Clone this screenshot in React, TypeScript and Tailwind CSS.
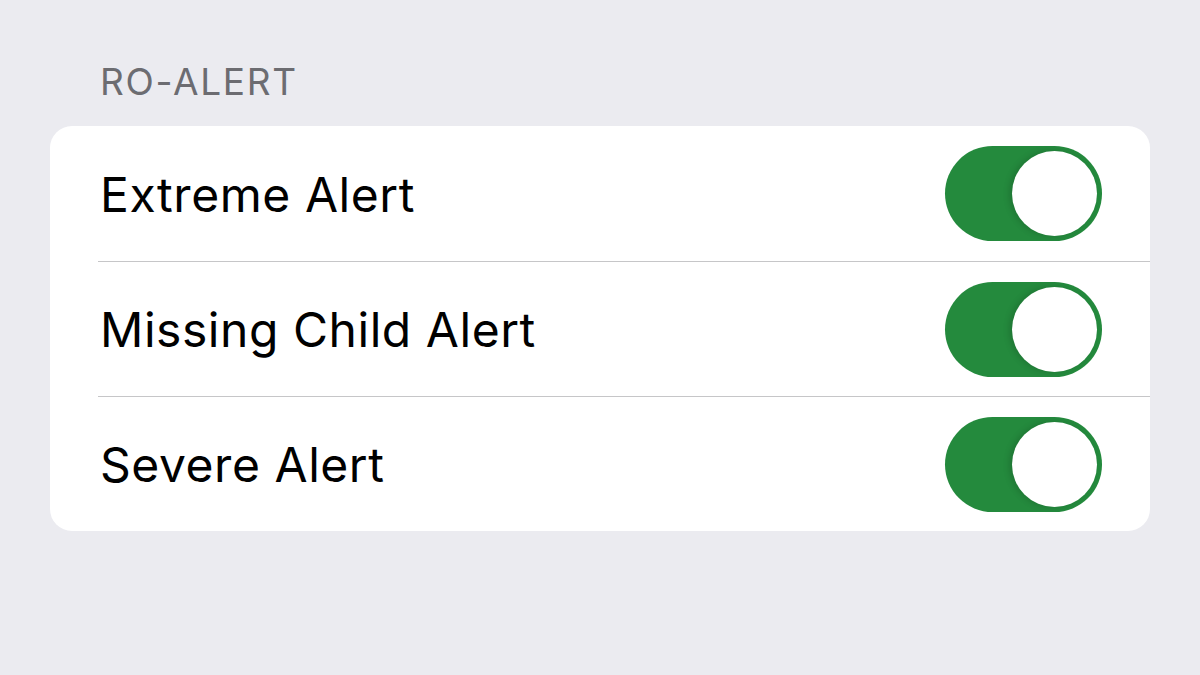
import React from "react";

function Toggle() {
  return (
    <div className="relative w-[157px] h-[95px] rounded-full bg-[#248a3d] shrink-0">
      <div className="absolute right-[5px] top-[5px] w-[85px] h-[85px] rounded-full bg-white shadow-[-3px_0_6px_rgba(0,0,0,0.15)]" />
    </div>
  );
}

const rows = ["Extreme Alert", "Missing Child Alert", "Severe Alert"];

export default function App() {
  return (
    <div
      className="w-[1200px] h-[675px] bg-[#ebebf0] pt-[62px] px-[50px]"
      style={{ fontFamily: "Inter, 'Noto Sans', sans-serif" }}
    >
      <div className="pl-[50px] h-[64px] text-[37px] leading-[40px] text-[#6c6c71] tracking-[1.7px]">
        RO-ALERT
      </div>
      <div className="bg-white rounded-[22px] overflow-hidden">
        {rows.map((r, i) => (
          <div key={r} className="flex h-[135px]">
            <div className="w-[48px] shrink-0" />
            <div
              className={`flex flex-1 items-center justify-between pl-[2px] pr-[48px] ${
                i > 0 ? "border-t border-[#c6c6c8]" : ""
              }`}
            >
              <span className="text-[48px] text-black tracking-[0.55px] pt-[2px]">{r}</span>
              <Toggle />
            </div>
          </div>
        ))}
      </div>
    </div>
  );
}
